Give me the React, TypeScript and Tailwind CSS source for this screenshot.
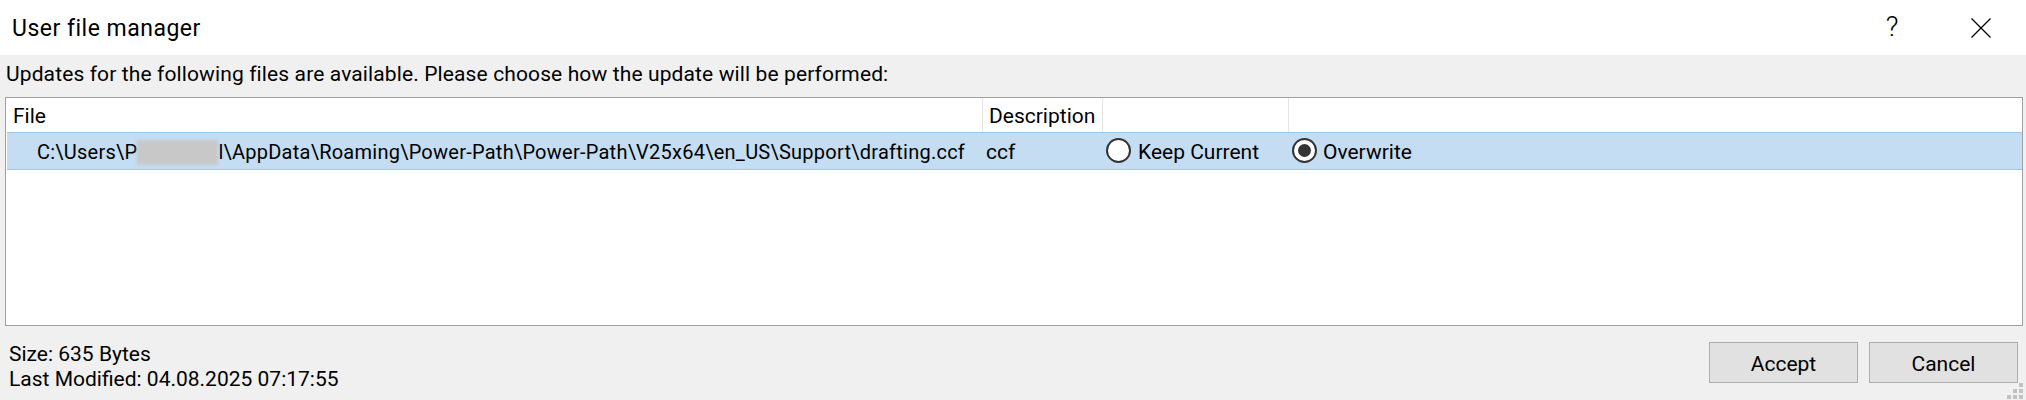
import React from "react";

const font = "font-[family-name:'Segoe_UI',Roboto,'Liberation_Sans',sans-serif]";

function Radio({ checked = false }: { checked?: boolean }) {
  return (
    <span className="mt-[5px] w-[25px] h-[25px] shrink-0 rounded-full border-2 border-[#333333] bg-white flex items-center justify-center">
      {checked && <span className="w-[13px] h-[13px] rounded-full bg-[#333333]" />}
    </span>
  );
}

export default function App() {
  return (
    <div className={`relative w-[2026px] h-[400px] bg-[#f0f0f0] flex flex-col overflow-hidden text-black ${font}`}>
      {/* Title bar */}
      <div className="h-[55px] shrink-0 bg-white flex">
        <div className="pl-[12px] pt-[15px] text-[23px] leading-[28px] tracking-[0.5px]">User file manager</div>
        <div className="ml-auto flex items-start pr-[25px] gap-[49px]">
          <div className="w-[40px] pt-[13px] text-center text-[28px] leading-[28px] font-light">?</div>
          <div className="w-[40px] pt-[18px] flex justify-center">
            <svg width="20" height="20" viewBox="0 0 20 20">
              <path d="M0.5 0.5 L19.5 19.5 M19.5 0.5 L0.5 19.5" stroke="#000" strokeWidth="1.3" fill="none" />
            </svg>
          </div>
        </div>
      </div>

      {/* Message */}
      <div className="pl-[6px] pt-[7px] text-[21px] leading-[25px] tracking-[0.12px] h-[33px] shrink-0">
        Updates for the following files are available. Please choose how the update will be performed:
      </div>

      {/* File list */}
      <div className="mt-[9px] ml-[5px] w-[2018px] h-[229px] shrink-0 border border-[#a0a0a0] bg-white flex flex-col text-[21px]">
        <div className="h-[34px] flex">
          <div className="w-[977px] border-r border-[#e5e5e5] pl-[7px] pt-[2px] leading-[32px]">File</div>
          <div className="w-[120px] border-r border-[#e5e5e5] pl-[6px] pt-[2px] leading-[32px]">Description</div>
          <div className="w-[186px] border-r border-[#e5e5e5]" />
          <div className="flex-1" />
        </div>
        <div className="ml-[1px] h-[38px] border-y border-[#99c9ef] bg-[#c4ddf2] flex">
          <div className="w-[976px] pl-[30px] pt-[2px] text-[20px] leading-[34px] tracking-[0.25px] whitespace-nowrap flex">
            <span>{"C:\\Users\\P"}</span>
            <span className="mt-[5px] w-[81px] h-[25px] bg-[#c8c8c8] blur-[1.5px]" />
            <span>{"l\\AppData\\Roaming\\Power-Path\\Power-Path\\V25x64\\en_US\\Support\\drafting.ccf"}</span>
          </div>
          <div className="w-[120px] pl-[3px] pt-[2px] leading-[34px]">ccf</div>
          <div className="w-[186px] pl-[3px] flex items-start gap-[7px]">
            <Radio />
            <span className="pt-[2px] leading-[34px]">Keep Current</span>
          </div>
          <div className="flex-1 pl-[3px] flex items-start gap-[6px]">
            <Radio checked />
            <span className="pt-[2px] leading-[34px]">Overwrite</span>
          </div>
        </div>
      </div>

      {/* Footer */}
      <div className="flex items-start pl-[9px] pr-[8px] pt-[16px] text-[21px]">
        <div className="leading-[25px]">
          <div>Size: 635 Bytes</div>
          <div>Last Modified: 04.08.2025 07:17:55</div>
        </div>
        <div className="ml-auto flex gap-[11px]">
          <button className="w-[149px] h-[41px] border border-[#adadad] bg-[#e1e1e1] pt-[3px] leading-[36px]">Accept</button>
          <button className="w-[149px] h-[41px] border border-[#adadad] bg-[#e1e1e1] pt-[3px] leading-[36px]">Cancel</button>
        </div>
      </div>

      {/* Size grip */}
      <svg className="absolute right-[3px] bottom-[1px]" width="16" height="16" viewBox="0 0 16 16">
        <rect x="12" y="0" width="4" height="4" fill="#c2c2c2" />
        <rect x="6" y="6" width="4" height="4" fill="#c2c2c2" />
        <rect x="12" y="6" width="4" height="4" fill="#c2c2c2" />
        <rect x="0" y="12" width="4" height="4" fill="#c2c2c2" />
        <rect x="6" y="12" width="4" height="4" fill="#c2c2c2" />
        <rect x="12" y="12" width="4" height="4" fill="#c2c2c2" />
      </svg>
    </div>
  );
}
